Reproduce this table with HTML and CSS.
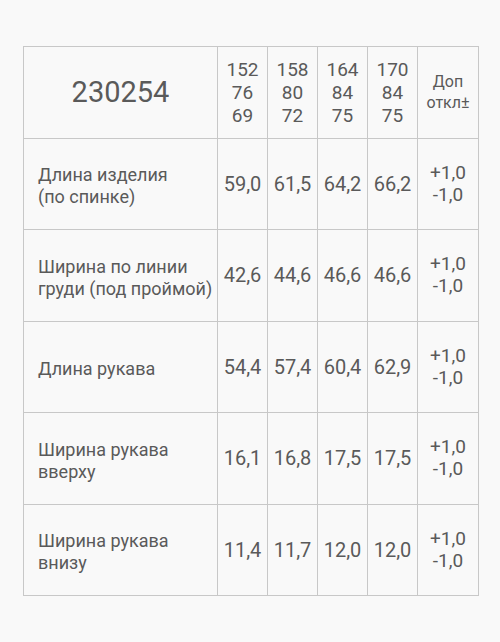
FILE: index.html
```html
<!DOCTYPE html>
<html lang="ru">
<head>
<meta charset="utf-8">
<title>230254</title>
<link rel="stylesheet" href="styles.css">
</head>
<body>
<table class="sizes">
  <colgroup>
    <col class="c-label">
    <col class="c-size"><col class="c-size"><col class="c-size"><col class="c-size">
    <col class="c-tol">
  </colgroup>
  <tr class="head">
    <td class="model">230254</td>
    <td class="size">152<br>76<br>69</td>
    <td class="size">158<br>80<br>72</td>
    <td class="size">164<br>84<br>75</td>
    <td class="size">170<br>84<br>75</td>
    <td class="tolhead">Доп<br>откл±</td>
  </tr>
  <tr>
    <td class="label">Длина изделия<br>(по спинке)</td>
    <td class="val">59,0</td><td class="val">61,5</td><td class="val">64,2</td><td class="val">66,2</td>
    <td class="tol">+1,0<br>-1,0</td>
  </tr>
  <tr>
    <td class="label">Ширина по линии<br>груди (под проймой)</td>
    <td class="val">42,6</td><td class="val">44,6</td><td class="val">46,6</td><td class="val">46,6</td>
    <td class="tol">+1,0<br>-1,0</td>
  </tr>
  <tr>
    <td class="label">Длина рукава</td>
    <td class="val">54,4</td><td class="val">57,4</td><td class="val">60,4</td><td class="val">62,9</td>
    <td class="tol">+1,0<br>-1,0</td>
  </tr>
  <tr>
    <td class="label">Ширина рукава<br>вверху</td>
    <td class="val">16,1</td><td class="val">16,8</td><td class="val">17,5</td><td class="val">17,5</td>
    <td class="tol">+1,0<br>-1,0</td>
  </tr>
  <tr>
    <td class="label">Ширина рукава<br>внизу</td>
    <td class="val">11,4</td><td class="val">11,7</td><td class="val">12,0</td><td class="val">12,0</td>
    <td class="tol">+1,0<br>-1,0</td>
  </tr>
</table>
</body>
</html>
```
FILE: styles.css
```css
html, body {
  margin: 0;
  padding: 0;
  background: #f9f9f9;
}
body {
  padding: 46px 0 0 23px;
  font-family: Roboto, "Liberation Sans", Arial, sans-serif;
  color: #5a5a5a;
}
.sizes {
  border-collapse: collapse;
  table-layout: fixed;
  width: 455px;
}
.c-label { width: 194px; }
.c-size { width: 50px; }
.c-tol { width: 61px; }
.sizes tr {
  height: 91.5px;
}
.sizes td {
  border: 1px solid #c8c8c8;
  padding: 0;
  text-align: center;
  vertical-align: middle;
}
.model {
  font-size: 29px;
}
.size {
  font-size: 19px;
  line-height: 23px;
}
.tolhead {
  font-size: 16px;
  line-height: 21px;
}
.label {
  text-align: left !important;
  padding: 5px 0 0 14px !important;
  font-size: 18px;
  line-height: 22px;
}
.val {
  font-size: 20px;
}
.tol {
  font-size: 19px;
  line-height: 22px;
}
```
